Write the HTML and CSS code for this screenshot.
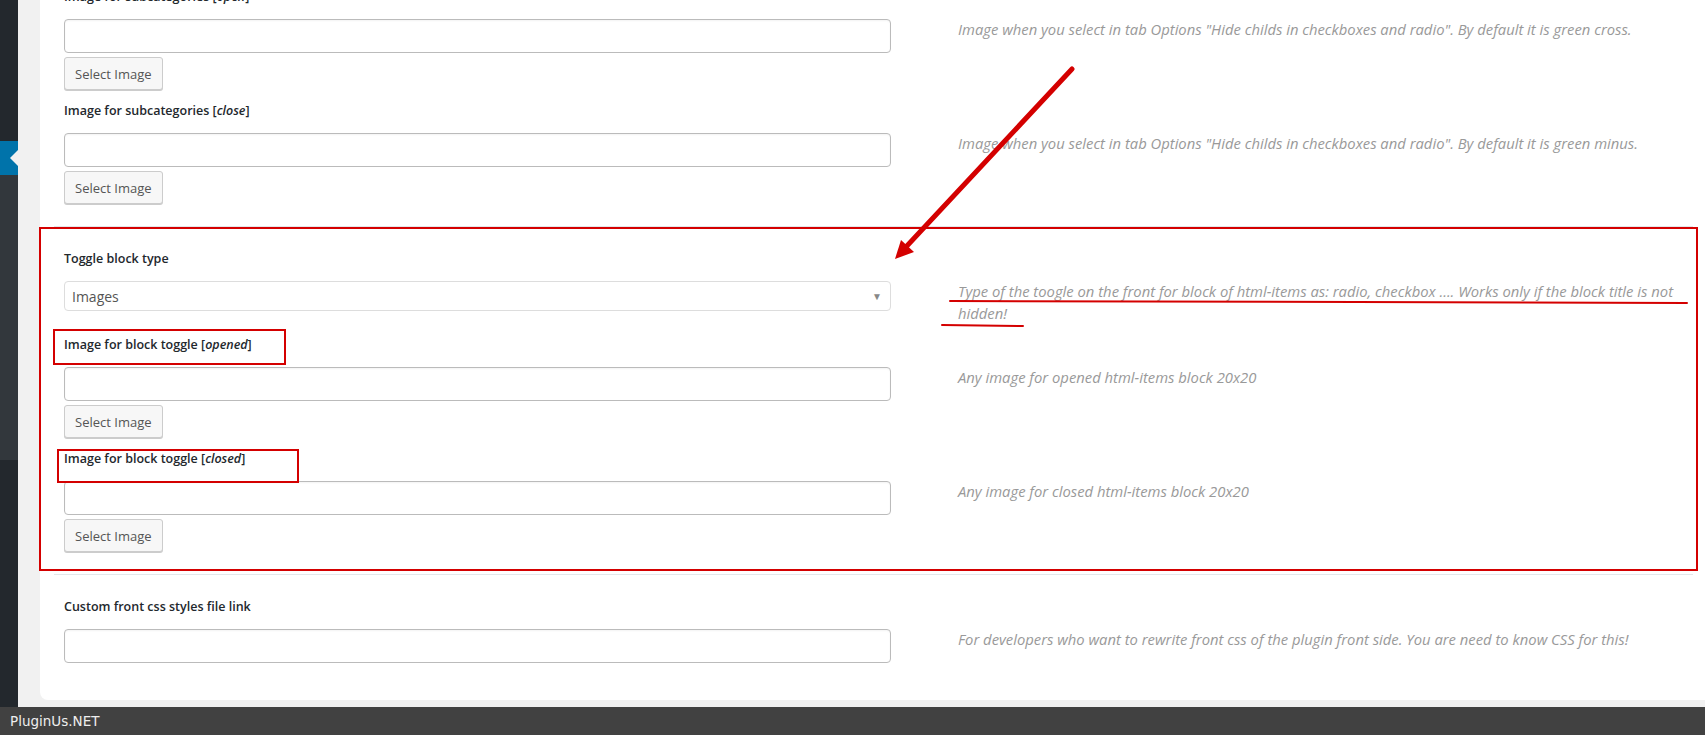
FILE: index.html
```html
<!DOCTYPE html>
<html>
<head>
    <title>Filter Options</title>
    <link rel="stylesheet" href="styles.css">
</head>
<body>
    <div class="screen">
        <div class="adminmenu">
            <div class="menu-top"></div>
            <div class="menu-current"></div>
            <div class="submenu"></div>
            <div class="menu-rest"></div>
        </div>

        <div class="content">
            <div class="panel">
                <!-- subcategories images -->
                <div class="section first">
                    <div class="row">
                        <div class="field">
                            <label>Image for subcategories [<i>open</i>]</label>
                            <input type="text" class="text-input">
                            <button class="select-btn">Select Image</button>
                        </div>
                        <p class="desc">Image when you select in tab Options "Hide childs in checkboxes and radio". By default it is green cross.</p>
                    </div>
                    <div class="row">
                        <div class="field">
                            <label>Image for subcategories [<i>close</i>]</label>
                            <input type="text" class="text-input">
                            <button class="select-btn">Select Image</button>
                        </div>
                        <p class="desc">Image when you select in tab Options "Hide childs in checkboxes and radio". By default it is green minus.</p>
                    </div>
                </div>

                <!-- toggle block -->
                <div class="section">
                    <div class="row">
                        <div class="field">
                            <label>Toggle block type</label>
                            <div class="select-box">
                                <span>Images</span>
                                <span class="caret">&#9660;</span>
                            </div>
                        </div>
                        <p class="desc">Type of the toogle on the front for block of html-items as: radio, checkbox .... Works only if the block title is not hidden!</p>
                    </div>
                    <div class="row">
                        <div class="field">
                            <label>Image for block toggle [<i>opened</i>]</label>
                            <input type="text" class="text-input">
                            <button class="select-btn">Select Image</button>
                        </div>
                        <p class="desc">Any image for opened html-items block 20x20</p>
                    </div>
                    <div class="row">
                        <div class="field">
                            <label>Image for block toggle [<i>closed</i>]</label>
                            <input type="text" class="text-input">
                            <button class="select-btn">Select Image</button>
                        </div>
                        <p class="desc">Any image for closed html-items block 20x20</p>
                    </div>
                </div>

                <!-- custom css -->
                <div class="section">
                    <div class="row">
                        <div class="field">
                            <label>Custom front css styles file link</label>
                            <input type="text" class="text-input">
                        </div>
                        <p class="desc">For developers who want to rewrite front css of the plugin front side. You are need to know CSS for this!</p>
                    </div>
                </div>
            </div>
        </div>
    </div>

    <div class="footer">PluginUs.NET</div>

    <!-- red marks drawn over the screenshot -->
    <svg class="annotations" width="1705" height="735" viewBox="0 0 1705 735">
        <g fill="none" stroke="#d40000" stroke-width="2">
            <rect x="40" y="228" width="1657" height="342"/>
            <rect x="54" y="330" width="231" height="34"/>
            <rect x="58" y="450" width="240" height="32"/>
        </g>
        <g stroke="#d40000" stroke-width="2" stroke-linecap="round">
            <line x1="950" y1="301" x2="1687" y2="303"/>
            <line x1="942" y1="325" x2="1023" y2="326"/>
        </g>
        <line x1="1072" y1="69" x2="905" y2="248" stroke="#d40000" stroke-width="5" stroke-linecap="round"/>
        <polygon points="895,259 901,240 914,252" fill="#d40000"/>
    </svg>
</body>
</html>
```

FILE: styles.css
```css
html, body {
    margin: 0;
    padding: 0;
    overflow: hidden;
}

body {
    font-family: "Open Sans", Arial, sans-serif;
    font-size: 13px;
    color: #23282d;
    background: #f1f1f1;
    width: 1705px;
    height: 735px;
    position: relative;
}

.screen {
    display: flex;
    height: 707px;
    overflow: hidden;
}

/* wp admin menu strip */
.adminmenu {
    width: 18px;
    display: flex;
    flex-direction: column;
    flex-shrink: 0;
}

.menu-top { height: 141px; background: #23282d; }
.menu-current { height: 34px; background: #0073aa; position: relative; }
.submenu { height: 285px; background: #32373c; }
.menu-rest { flex: 1; background: #23282d; }

.menu-current:after {
    content: "";
    position: absolute;
    right: 0;
    top: 9px;
    border-right: 8px solid #f1f1f1;
    border-top: 8px solid transparent;
    border-bottom: 8px solid transparent;
}

.content {
    flex: 1;
    padding-left: 22px;
    background: #f1f1f1;
}

.panel {
    background: #fff;
    margin-top: -35px;
    padding: 0 12px 15px 14px;
    border-radius: 0 0 0 8px;
}

.section {
    padding: 22px 0 22px 10px;
    border-top: 1px solid #e3e7ea;
}

.section.first {
    border-top: none;
}

.row {
    display: flex;
    margin-bottom: 11px;
}

.row:last-child {
    margin-bottom: 0;
}

.field {
    width: 827px;
    flex-shrink: 0;
}

.field label {
    display: block;
    font-weight: 600;
    font-size: 12.5px;
    line-height: 20px;
    margin-bottom: 12px;
    color: #23282d;
}

.field label i {
    font-weight: 600;
}

.text-input {
    display: block;
    box-sizing: border-box;
    width: 100%;
    height: 34px;
    margin: 0;
    border: 1px solid #bbbbbb;
    border-radius: 4px;
    background: #fff;
    box-shadow: inset 0 1px 2px rgba(0,0,0,0.05);
}

.select-btn {
    display: block;
    box-sizing: border-box;
    height: 33px;
    margin-top: 4px;
    padding: 0 10px;
    font-family: "Open Sans", Arial, sans-serif;
    font-size: 13px;
    color: #555;
    background: #f7f7f7;
    border: 1px solid #cccccc;
    border-radius: 3px;
    box-shadow: 0 1px 0 #cccccc;
}

.select-box {
    box-sizing: border-box;
    height: 30px;
    display: flex;
    align-items: center;
    justify-content: space-between;
    padding: 0 8px 0 7px;
    border: 1px solid #dddddd;
    border-radius: 4px;
    font-size: 14px;
    color: #555;
}

.select-box .caret {
    font-size: 10px;
    color: #888;
}

.desc {
    flex: 1;
    margin: 0 0 0 67px;
    padding-top: 31px;
    font-size: 14.8px;
    line-height: 22px;
    font-style: italic;
    color: #999;
}

.footer {
    height: 28px;
    line-height: 28px;
    padding-left: 10px;
    background: #414141;
    color: #eeeeee;
    font-family: "DejaVu Sans", sans-serif;
    font-size: 13.5px;
}

.annotations {
    position: absolute;
    top: 0;
    left: 0;
    pointer-events: none;
}
```
